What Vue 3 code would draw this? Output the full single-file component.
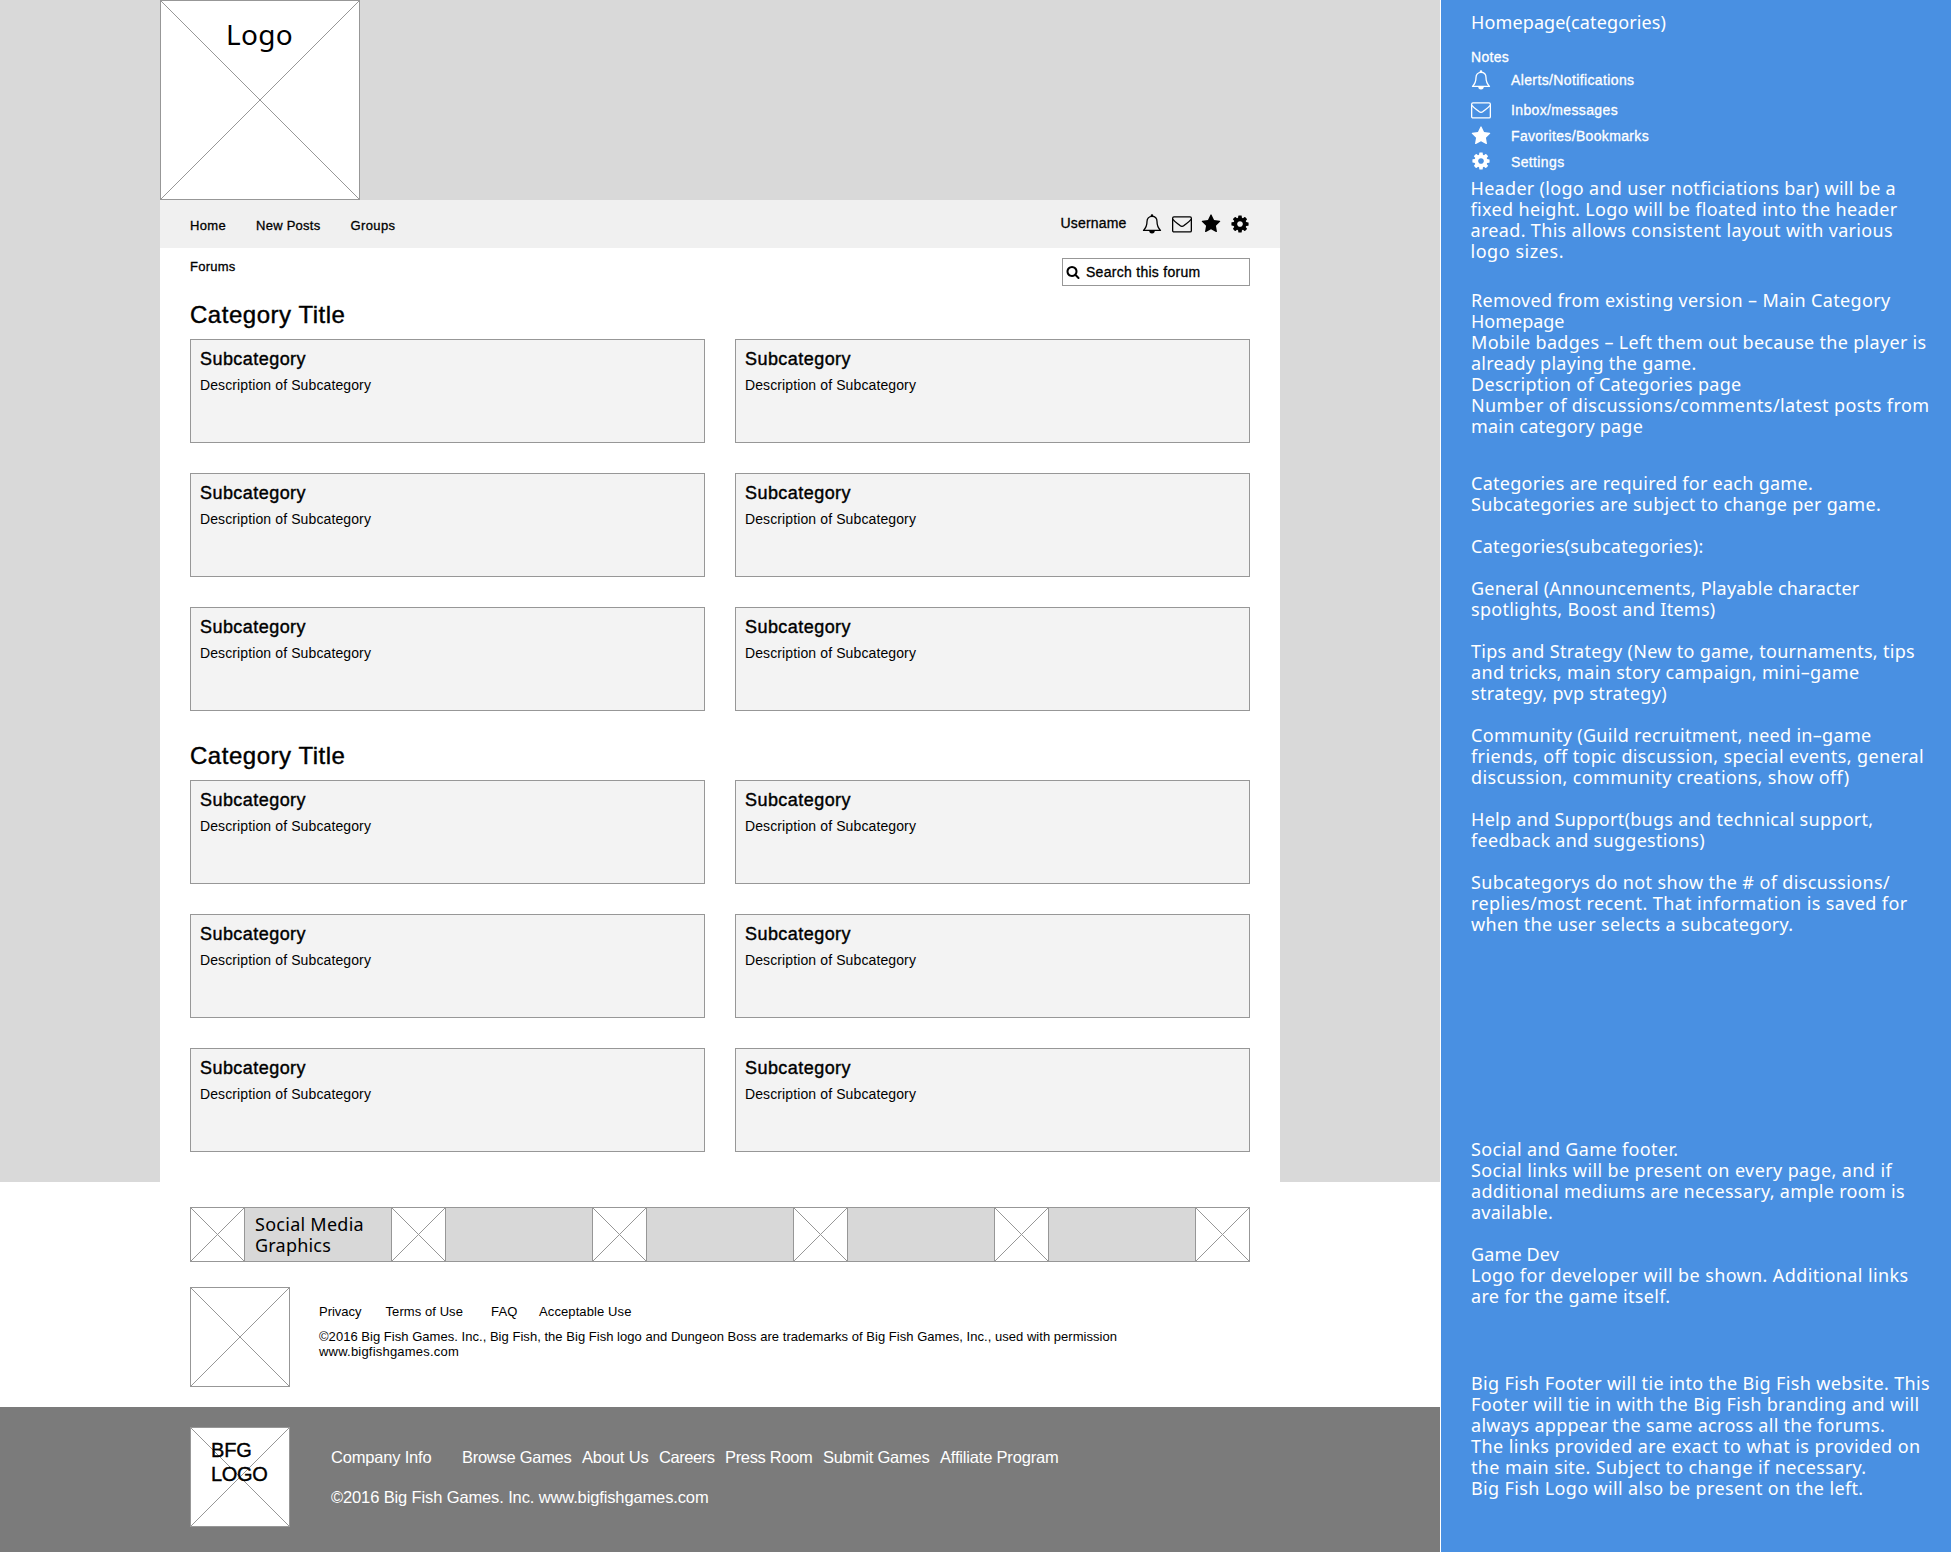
<script setup>
import { h } from 'vue'

// Tracks a line of text so that it sets to the given width in pixels.
const vFit = {
  mounted(el, { value }) {
    if (!value) return
    const natural = el.getBoundingClientRect().width
    el.style.letterSpacing = `${(value - natural) / el.textContent.length}px`
  },
}

const glyphs = {
  star: 'M1728 647q0 22-26 48l-363 354 86 500q1 7 1 20 0 21-10.5 35.5t-30.5 14.5q-19 0-40-12l-449-236-449 236q-22 12-40 12-21 0-31.5-14.5t-10.5-35.5q0-6 2-20l86-500-364-354q-25-27-25-48 0-37 56-46l502-73 225-455q19-41 49-41t49 41l225 455 502 73q56 9 56 46z',
  cog: 'M1152 896q0-106-75-181t-181-75-181 75-75 181 75 181 181 75 181-75 75-181zm512-109v222q0 12-8 23t-20 13l-185 28q-19 54-39 91 35 50 107 138 10 12 10 25t-9 23q-27 37-99 108t-94 71q-12 0-26-9l-138-108q-44 23-91 38-16 136-29 186-7 28-36 28h-222q-14 0-24.5-8.5t-11.5-21.5l-28-184q-49-16-90-37l-141 107q-10 9-25 9-14 0-25-11-126-114-165-168-7-10-7-23 0-12 8-23 15-21 51-66.5t54-70.5q-27-50-41-99l-183-27q-13-2-21-12.5t-8-23.5v-222q0-12 8-23t19-13l186-28q14-46 39-92-40-57-107-138-10-12-10-24 0-10 9-23 26-36 98.5-107.5t94.5-71.5q13 0 26 10l138 107q44-23 91-38 16-136 29-186 7-28 36-28h222q14 0 24.5 8.5t11.5 21.5l28 184q49 16 90 37l142-107q9-9 24-9 13 0 25 10 129 119 165 170 7 8 7 22 0 12-8 23-15 21-51 66.5t-54 70.5q26 50 41 98l183 28q13 2 21 12.5t8 23.5z',
  search: 'M1216 832q0-185-131.5-316.5t-316.5-131.5-316.5 131.5-131.5 316.5 131.5 316.5 316.5 131.5 316.5-131.5 131.5-316.5zm512 832q0 52-38 90t-90 38q-54 0-90-38l-343-342q-179 124-399 124-143 0-273.5-55.5t-225-150-150-225-55.5-273.5 55.5-273.5 150-225 225-150 273.5-55.5 273.5 55.5 225 150 150 225 55.5 273.5q0 220-124 399l343 343q37 37 37 90z',
}

const line = { fill: 'none', stroke: 'currentColor', 'stroke-width': 1.3, 'stroke-linejoin': 'round' }

function Icon({ name, size = 20 }) {
  const box = { width: size, height: size, style: 'display:block;flex:none' }
  if (name === 'bell') {
    return h('svg', { ...box, viewBox: '0 0 20 20' }, [
      h('path', { ...line, d: 'M1.5 16.4C4 14 5 11.200 5 7.600C5 4.500 6.800 2.400 10 2.400C13.200 2.400 15 4.500 15 7.600C15 11.200 16 14 18.500 16.400Z' }),
      h('circle', { cx: 10, cy: 1.6, r: 1.3, fill: 'currentColor' }),
      h('path', { fill: 'currentColor', d: 'M7.200 16.600H12.800A2.800 3 0 0 1 7.200 16.600Z' }),
    ])
  }
  if (name === 'mail') {
    return h('svg', { ...box, viewBox: '0 0 20 20' }, [
      h('rect', { ...line, x: 0.65, y: 2.95, width: 18.7, height: 15, rx: 1.3 }),
      h('path', { ...line, d: 'M0.900 5.400C3 8 6 9.800 8 11.600C9.300 12.700 10.700 12.700 12 11.600C14 9.800 17 8 19.100 5.400' }),
    ])
  }
  return h('svg', { ...box, viewBox: '0 0 1792 1792' }, [h('path', { fill: 'currentColor', d: glyphs[name] })])
}
Icon.props = ['name', 'size']

function Cross() {
  return h('svg', { width: '100%', height: '100%', style: 'display:block' }, [
    h('line', { x1: 0, y1: 0, x2: '100%', y2: '100%', stroke: '#979797' }),
    h('line', { x1: 0, y1: '100%', x2: '100%', y2: 0, stroke: '#979797' }),
  ])
}

const nav = [['Home', 36], ['New Posts', 64.5], ['Groups', 45]]
const userIcons = ['bell', 'mail', 'star', 'cog']
const legend = [
  ['bell', 'Alerts/Notifications', 123.5],
  ['mail', 'Inbox/messages', 107],
  ['star', 'Favorites/Bookmarks', 138],
  ['cog', 'Settings', 53.5],
]
const gameLinks = [['Privacy', 42.5, 24], ['Terms of Use', 77.5, 28], ['FAQ', 26.5, 21.5], ['Acceptable Use', 92.5, 0]]
const siteLinks = [
  ['Company Info', 100.5, 30.5], ['Browse Games', 109.5, 10.5], ['About Us', 66.5, 10.5], ['Careers', 55.5, 10.5],
  ['Press Room', 87.5, 10.5], ['Submit Games', 106.5, 10.5], ['Affiliate Program', 118.5, 0],
]
const notes = [
  { id: 'header', lines: [
    ['Header (logo and user notficiations bar) will be a', 425.5], ['fixed height. Logo will be floated into the header', 427],
    ['aread. This allows consistent layout with various', 422.5], ['logo sizes.', 93.5],
  ] },
  { id: 'removed', lines: [
    ['Removed from existing version – Main Category', 419.5], ['Homepage', 93.5],
    ['Mobile badges – Left them out because the player is', 455.5], ['already playing the game.', 225.5],
    ['Description of Categories page', 270.5], ['Number of discussions/comments/latest posts from', 458.5], ['main category page', 172],
  ] },
  { id: 'categories', lines: [
    ['Categories are required for each game.', 342], ['Subcategories are subject to change per game.', 410], [''],
    ['Categories(subcategories):', 232.5], [''],
    ['General (Announcements, Playable character', 388.5], ['spotlights, Boost and Items)', 244.5], [''],
    ['Tips and Strategy (New to game, tournaments, tips', 444], ['and tricks, main story campaign, mini–game', 388.5], ['strategy, pvp strategy)', 196], [''],
    ['Community (Guild recruitment, need in–game', 400.5], ['friends, off topic discussion, special events, general', 453], ['discussion, community creations, show off)', 378.5], [''],
    ['Help and Support(bugs and technical support,', 402.5], ['feedback and suggestions)', 234], [''],
    ['Subcategorys do not show the # of discussions/', 419], ['replies/most recent. That information is saved for', 436.5], ['when the user selects a subcategory.', 322.5],
  ] },
  { id: 'social-notes', lines: [
    ['Social and Game footer.', 207.5], ['Social links will be present on every page, and if', 421],
    ['additional mediums are necessary, ample room is', 434], ['available.', 82], [''],
    ['Game Dev', 88], ['Logo for developer will be shown. Additional links', 437.5], ['are for the game itself.', 199.5],
  ] },
  { id: 'bigfish', lines: [
    ['Big Fish Footer will tie into the Big Fish website. This', 459], ['Footer will tie in with the Big Fish branding and will', 448.5],
    ['always apppear the same across all the forums.', 414], ['The links provided are exact to what is provided on', 449.5],
    ['the main site. Subject to change if necessary.', 395.5], ['Big Fish Logo will also be present on the left.', 392.5],
  ] },
]
</script>

<template>
  <div class="board">
    <div class="site">
      <div class="stage">
        <div class="page">
          <div class="masthead">
            <div class="logo"><Cross /><span v-fit="67" class="logo-text">Logo</span></div>
          </div>
          <nav class="bar">
            <div class="links"><span v-for="[t, w] in nav" :key="t" v-fit="w">{{ t }}</span></div>
            <div class="user">
              <span v-fit="66">Username</span>
              <Icon v-for="n in userIcons" :key="n" :name="n" :class="['ui', n]" />
            </div>
          </nav>
          <div class="crumbs">
            <span v-fit="45.5" class="crumb">Forums</span>
            <div class="search"><Icon name="search" :size="14" /><span v-fit="114.5">Search this forum</span></div>
          </div>
          <section v-for="s in 2" :key="s" class="category">
            <h2><span v-fit="155.5">Category Title</span></h2>
            <div class="grid">
              <article v-for="c in 6" :key="c" class="card">
                <h3><span v-fit="106">Subcategory</span></h3>
                <p><span v-fit="171">Description of Subcategory</span></p>
              </article>
            </div>
          </section>
        </div>
      </div>

      <div class="game-footer">
        <div class="social">
          <div v-for="n in 6" :key="n" class="tile"><Cross /></div>
          <div class="social-label"><div><span v-fit="109">Social Media</span></div><div><span v-fit="76">Graphics</span></div></div>
        </div>
        <div class="developer">
          <div class="box"><Cross /></div>
          <div class="legal">
            <div class="row"><span v-for="[t, w, g] in gameLinks" :key="t" v-fit="w" :style="{ marginRight: g + 'px' }">{{ t }}</span></div>
            <p><span v-fit="798">©2016 Big Fish Games. Inc., Big Fish, the Big Fish logo and Dungeon Boss are trademarks of Big Fish Games, Inc., used with permission</span></p>
            <p><span v-fit="140">www.bigfishgames.com</span></p>
          </div>
        </div>
      </div>

      <footer class="site-footer">
        <div class="box"><Cross /><div class="bfg"><div><span v-fit="40.5">BFG</span></div><div><span v-fit="56.5">LOGO</span></div></div></div>
        <div class="company">
          <div class="row"><span v-for="[t, w, g] in siteLinks" :key="t" v-fit="w" :style="{ marginRight: g + 'px' }">{{ t }}</span></div>
          <p><span v-fit="377.5">©2016 Big Fish Games. Inc. www.bigfishgames.com</span></p>
        </div>
      </footer>
    </div>

    <aside class="notes">
      <h1><span v-fit="195">Homepage(categories)</span></h1>
      <div class="notes-title"><span v-fit="38">Notes</span></div>
      <ul class="legend">
        <li v-for="[n, t, w] in legend" :key="n" :class="n"><Icon :name="n" /><span v-fit="w">{{ t }}</span></li>
      </ul>
      <div v-for="b in notes" :key="b.id" :class="['note', b.id]">
        <div v-for="([t, w], i) in b.lines" :key="i" class="line"><span v-fit="w">{{ t }}</span></div>
      </div>
    </aside>
  </div>
</template>

<style>
body { margin: 0; background: #fff; }
</style>

<style scoped>
* { box-sizing: border-box; }
h1, h2, h3, p, ul { margin: 0; padding: 0; font-weight: 400; list-style: none; }
span { display: inline-block; white-space: nowrap; }

.board { display: flex; width: 1951px; height: 1552px; overflow: hidden; font-family: "Liberation Sans", Arial, sans-serif; color: #000; background: #fff; }
.site { width: 1440px; display: flex; flex-direction: column; }

.stage { height: 1182px; padding: 0 160px; background: #d9d9d9; }
.page { height: 1182px; background: #fff; }
.masthead { height: 200px; background: #d9d9d9; }
.logo { position: relative; width: 200px; height: 200px; background: #fff; border: 1px solid #979797; }
.logo-text { position: absolute; left: 65px; top: 13px; font: 28px/40px "Noto Sans", sans-serif; }

.bar { display: flex; justify-content: space-between; height: 48px; padding: 0 30px; background: #f0f0f0; }
.bar span, .crumb, .search span, .legend span, .notes-title { -webkit-text-stroke: .3px currentColor; }
.links { display: flex; gap: 30px; padding-top: 16px; font-size: 13px; line-height: 20px; }
.user { display: flex; padding-top: 13px; font-size: 14px; line-height: 20px; }
.ui { margin-top: 1px; }
.ui.bell { margin-left: 15px; }
.ui.mail { margin-left: 10px; }
.ui.star { margin-left: 9px; }
.ui.cog { margin-left: 9.500px; }

.crumbs { display: flex; justify-content: space-between; height: 47px; padding: 10px 30px 0 30px; }
.crumb { font-size: 13px; line-height: 18px; }
.search { display: flex; align-items: center; width: 188px; height: 28px; padding: 0 0 1px 3px; border: 1px solid #979797; font-size: 14px; line-height: 20px; }
.search span { margin-left: 6px; }

.category { padding: 0 30px; margin-bottom: 25px; }
.category h2 { height: 44px; padding-top: 4px; font-size: 24px; line-height: 32px; -webkit-text-stroke: .4px currentColor; }
.grid { display: grid; grid-template-columns: 1fr 1fr; gap: 30px; }
.card { height: 104px; padding: 9px; border: 1px solid #979797; background: #f3f3f3; }
.card h3 { font-size: 18px; line-height: 20px; -webkit-text-stroke: .4px currentColor; }
.card p { margin-top: 6px; font-size: 14px; line-height: 20px; }

.game-footer { height: 225px; padding: 25px 190px 0; }
.social { position: relative; display: flex; justify-content: space-between; height: 55px; border: solid #979797; border-width: 1px 0; background: #d8d8d8; }
.tile { width: 55px; border: solid #979797; border-width: 0 1px; background: #fff; }
.social-label { position: absolute; left: 65px; top: 6px; font: 18px/21px "Noto Sans", sans-serif; }
.developer { display: flex; margin-top: 25px; }
.box { position: relative; flex: none; width: 100px; height: 100px; border: 1px solid #979797; background: #fff; }
.legal { margin-left: 29px; padding-top: 17px; font-size: 13px; }
.row { display: flex; }
.legal .row { height: 25px; line-height: 15px; }
.legal p { height: 15px; line-height: 15px; }

.site-footer { display: flex; height: 145px; padding: 20px 190px 0; background: #7b7b7b; color: #fff; }
.bfg { position: absolute; left: 20px; top: 10px; color: #000; font-size: 20px; line-height: 24px; -webkit-text-stroke: .4px currentColor; }
.company { margin-left: 41px; padding-top: 20px; font-size: 16.500px; line-height: 20px; }
.company .row { height: 40px; }

.notes { width: 511px; padding-left: 30px; border-left: 1px solid #fff; background: #4990e2; color: #fff; }
.notes h1 { height: 46px; padding-top: 11px; font: 18px/22px "Noto Sans", sans-serif; }
.notes-title { height: 24px; padding-top: 1px; font-size: 14px; line-height: 20px; }
.legend li { display: flex; height: 26px; font-size: 14px; line-height: 20px; }
.legend li.bell { height: 30px; }
.legend li span { margin-left: 20px; }
.legend .star svg { margin-top: -.5px; }
.legend .cog svg { margin-top: -1px; }
.note { font: 18px/21px "Noto Sans", sans-serif; }
.line { height: 21px; }
.header { margin-left: -.5px; }
.removed { margin-top: 28px; }
.categories { margin-top: 36px; }
.social-notes { margin-top: 204px; }
.bigfish { margin-top: 66px; }
</style>
